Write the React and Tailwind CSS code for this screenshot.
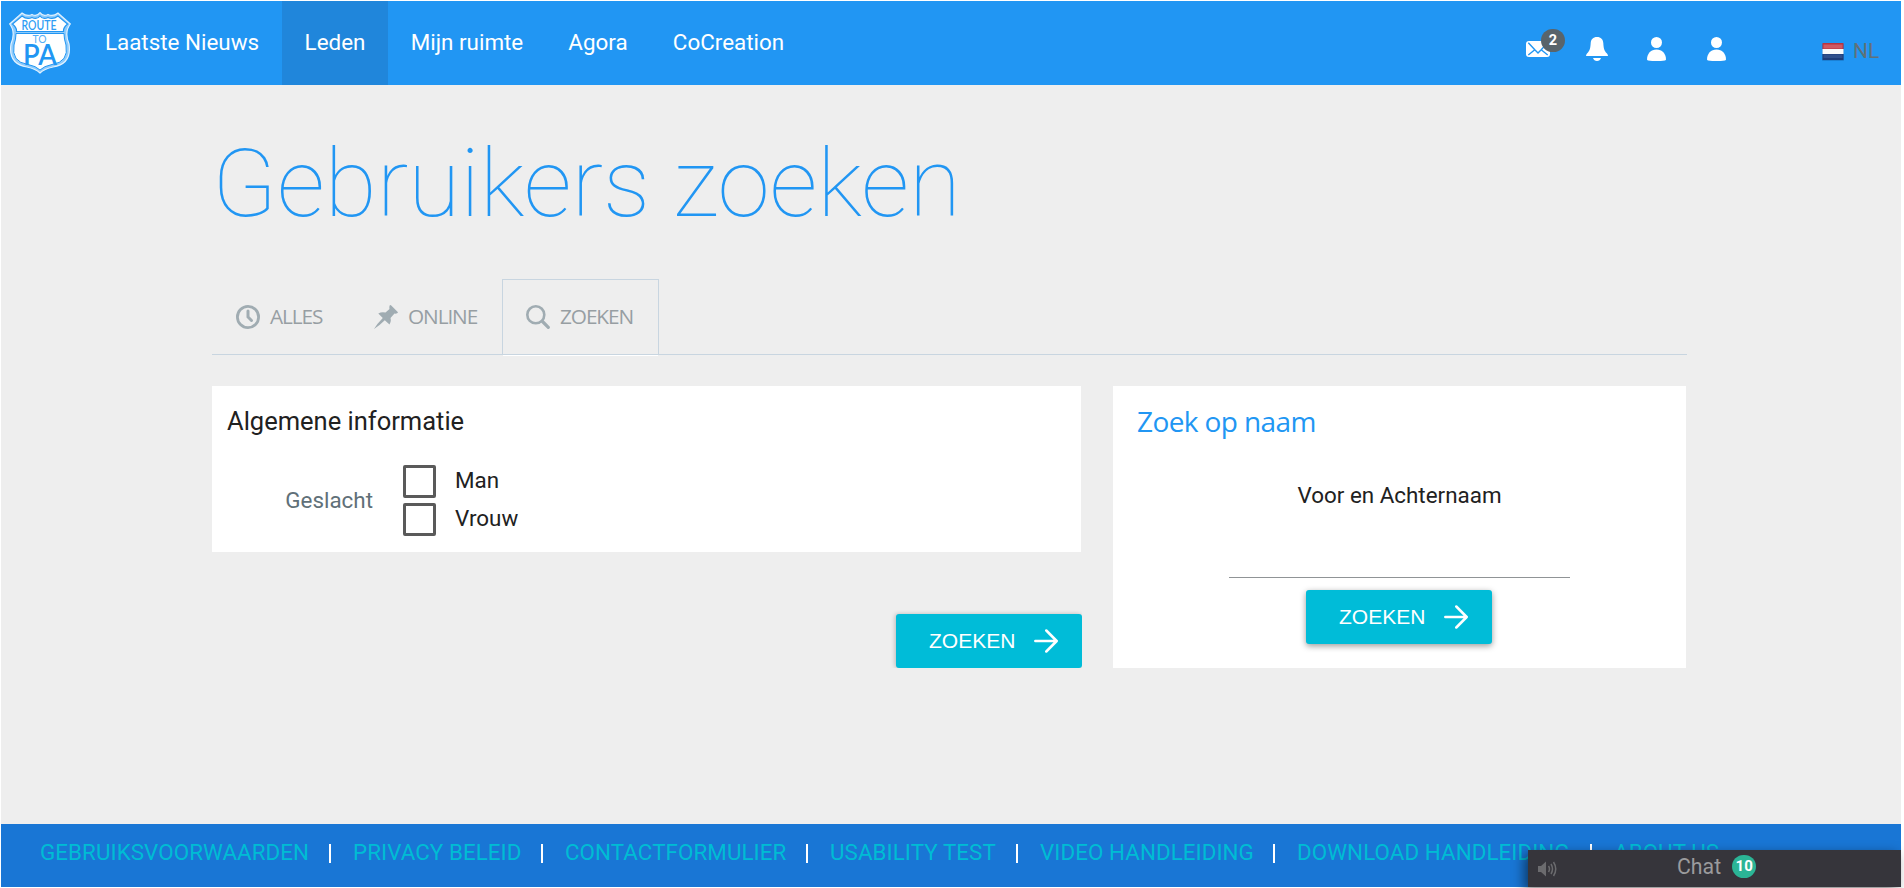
import React from "react";

function Logo() {
  return (
    <svg viewBox="0 0 62 62" className="h-[62px] w-[62px]">
      <path d="M13 1Q18 5 23 2.5Q28 5 31 .7Q34 5 39 2.5Q44 5 49 1L61.3 12Q55 20 60 32Q63 52 44 55Q35 57 31 61Q27 57 18 55Q-1 52 2 32Q7 20 .7 12Z" fill="#8ecbfb" stroke="#e3f2fe" strokeWidth="1.2" />
      <path d="M13 4Q18 8 23 5.5Q28 8 31 4Q34 8 39 5.5Q44 8 49 4L58.5 12Q54 16 54.500 19.500H7.500Q8 16 3.500 12Z" fill="#fff" stroke="#2196f3" strokeWidth="1.2" />
      <path d="M7 21.500H55Q55 27 57 33Q60 50 43 52.500Q35 54 31 58Q27 54 19 52.500Q2 50 5 33Q7 27 7 21.500Z" fill="#fff" stroke="#2196f3" strokeWidth="1" />
      <text x="30" y="18.300" textAnchor="middle" fontSize="13.500" textLength="35" lengthAdjust="spacingAndGlyphs" className="fill-[#2f9df4] font-['Lato',sans-serif] font-semibold">ROUTE</text>
      <text x="30.500" y="30.500" textAnchor="middle" fontSize="11.500" textLength="14" lengthAdjust="spacingAndGlyphs" className="fill-[#55aef6] font-['Lato',sans-serif]">TO</text>
      <text x="31" y="52.500" textAnchor="middle" fontSize="28.500" textLength="34" lengthAdjust="spacingAndGlyphs" className="fill-[#2196f3] font-['Lato',sans-serif] font-semibold">PA</text>
    </svg>
  );
}

function MailIcon() {
  return (
    <svg viewBox="0 0 24 16" className="h-4 w-6">
      <rect width="24" height="16" rx="3" fill="#fff" />
      <path d="M2.300 1.800 9.300 9.300 12 12 14.700 9.300 21.700 1.800M2.300 14 8.800 8.800M21.700 14 15.200 8.800" fill="none" stroke="#2196f3" strokeWidth="1.400" />
    </svg>
  );
}

function BellIcon() {
  return (
    <svg viewBox="0 0 22 24" className="h-6 w-[22px]" fill="#fff">
      <path d="M11 0C7 0 5 2.500 4.700 6C4.400 11 4 13.500 1 16.500Q0 17.500 0 19H22Q22 17.500 21 16.500C18 13.500 17.600 11 17.300 6C17 2.500 15 0 11 0ZM7 21H15Q14 24 11 24Q8 24 7 21Z" />
    </svg>
  );
}

function PersonIcon() {
  return (
    <svg viewBox="0 0 19 24" className="h-6 w-[19px]" fill="#fff">
      <circle cx="9.500" cy="5.500" r="5.500" />
      <path d="M0 22.500C0 16.500 4 12.500 9.500 12.500S19 16.500 19 22.500Q19 23.200 18 23.400Q9.500 24.500 1 23.400Q0 23.200 0 22.500Z" />
    </svg>
  );
}

function Flag() {
  return (
    <svg viewBox="0 0 22 18" className="h-[18px] w-[22px]">
      <rect y="1" width="22" height="17" rx="1" fill="#1565b0" opacity=".45" />
      <rect x=".5" width="21" height="6" fill="#b83341" />
      <rect x="1.500" y="1.500" width="19" height="4" fill="#cf5963" />
      <rect x=".5" y="6" width="21" height="5" fill="#fafafa" />
      <rect x=".5" y="11" width="21" height="6" fill="#1e3c78" />
      <rect x="1.500" y="11.500" width="19" height="3.500" fill="#304f8b" />
    </svg>
  );
}

function ClockIcon() {
  return (
    <svg viewBox="0 0 24 24" className="h-6 w-6" fill="none" stroke="#a0acb2" strokeLinecap="round">
      <circle cx="12" cy="12" r="10.600" strokeWidth="2.800" />
      <path d="M12 6V12L15.500 15.500" strokeWidth="3" />
    </svg>
  );
}

function PinIcon() {
  return (
    <svg viewBox="0 0 24 24" className="h-6 w-6" fill="#a0acb2">
      <path d="M16 0Q17 0 17.500 .8L23.500 6.800Q24.300 7.600 23.500 8Q22 9 20.500 8.600L16.500 13Q17.500 16.500 15.500 19.500L10.800 15.200Q5.500 20.500 0 24Q3 18.800 8.800 13L4.300 8.500Q7.500 6.500 11.500 7.500L15.500 4Q15 1.500 16 0Z" />
    </svg>
  );
}

function SearchIcon() {
  return (
    <svg viewBox="0 0 24 24" className="h-6 w-6" fill="none" stroke="#a0acb2" strokeLinecap="round">
      <circle cx="9.800" cy="9.800" r="8.500" strokeWidth="2.600" />
      <path d="M16.500 16.500 22.300 22.300" strokeWidth="3.200" />
    </svg>
  );
}

function ArrowIcon() {
  return (
    <svg viewBox="0 0 24 24" className="h-6 w-6" fill="none" stroke="#fff" strokeWidth="2.500" strokeLinecap="round" strokeLinejoin="round">
      <path d="M1.300 12H22.500M12.300 1.500 22.700 12 12.300 22.500" />
    </svg>
  );
}

function SearchButton({ className }) {
  return (
    <button className={"flex h-[54px] w-[186px] items-center rounded-[3px] bg-[#00bcd8] pl-[33px] font-['Liberation_Sans',sans-serif] text-[21px] text-white " + className}>
      <span className="w-[105px] text-left">ZOEKEN</span>
      <ArrowIcon />
    </button>
  );
}

const nav = [
  ["Laatste Nieuws", "w-[199px] pr-px"],
  ["Leden", "w-[106px] bg-[#2086db]"],
  ["Mijn ruimte", "w-[158px]"],
  ["Agora", "w-[104px]"],
  ["CoCreation", "w-[157px]"],
];

const tabs = [
  ["ALLES", ClockIcon, "w-[138px] pl-[24px]"],
  ["ONLINE", PinIcon, "w-[152px] pl-[24px]"],
  ["ZOEKEN", SearchIcon, "w-[157px] border-x border-[#c8d5e0] shadow-[inset_0_1px_0_#c8d5e0] pl-[23px]"],
];

const links = [
  ["GEBRUIKSVOORWAARDEN", "w-[313px]"],
  ["PRIVACY BELEID", "w-[212px]"],
  ["CONTACTFORMULIER", "w-[265px]"],
  ["USABILITY TEST", "w-[210px]"],
  ["VIDEO HANDLEIDING", "w-[257px]"],
  ["DOWNLOAD HANDLEIDING", "w-[317px]"],
  ["ABOUT US", "w-[150px]"],
];

export default function App() {
  return (
    <div className="h-[888px] w-[1904px] overflow-hidden bg-white pt-px pb-px pl-px font-['Roboto',sans-serif]">
      <div className="flex h-[886px] w-[1900px] flex-col bg-[#eeeeee]">
        <header className="flex h-[84px] shrink-0 items-center bg-[#2196f3]">
          <div className="w-[82px] pl-2">
            <Logo />
          </div>
          <nav className="flex h-full grow">
            {nav.map(([label, cls]) => (
              <a key={label} className={"flex h-full items-center justify-center whitespace-nowrap text-[22.4px] text-white " + cls}>
                {label}
              </a>
            ))}
          </nav>
          <div className="flex w-[375px] items-center pt-3">
            <div className="relative flex w-[60px]">
              <MailIcon />
              <span className="absolute -top-3 left-[15px] flex h-[23px] w-6 items-center justify-center rounded-full bg-[#59646b] text-[14.5px] font-bold text-white">2</span>
            </div>
            <div className="w-[61px]"><BellIcon /></div>
            <div className="w-[60px]"><PersonIcon /></div>
            <div className="w-[115px]"><PersonIcon /></div>
            <div className="flex items-center gap-[9px] pt-[5px] text-[21px] text-[#607178]">
              <Flag />
              <span>NL</span>
            </div>
          </div>
        </header>

        <main className="ml-[211px] w-[1475px] grow">
          <h1 className="mt-[43px] h-[120px] whitespace-nowrap text-[94.75px] leading-[112px] font-thin text-[#2196f3]">Gebruikers zoeken</h1>
          <div className="mt-[31px] flex h-[76px] border-b border-[#c8d5e0]">
            {tabs.map(([label, Icon, cls]) => (
              <div key={label} className={"flex h-[75px] items-center gap-[10px] " + cls}>
                <Icon />
                <span className="pt-px font-['Open_Sans',sans-serif] text-[20.8px] font-medium tracking-[-1.1px] text-[#979ea3]">{label}</span>
              </div>
            ))}
          </div>
          <div className="ml-[291px] h-px w-[155px] bg-white" />

          <div className="mt-[30px] flex h-[282px]">
            <div className="flex w-[870px] flex-col justify-between">
              <section className="h-[166px] w-[869px] bg-white pt-[19px] pl-[15px]">
                <h2 className="text-[25.500px] leading-8 text-[#212121]">Algemene informatie</h2>
                <div className="mt-[28px] flex items-center">
                  <span className="w-[146px] text-right text-[22.4px] text-[#607078]">Geslacht</span>
                  <div className="ml-[30px] flex flex-col gap-[5px]">
                    {["Man", "Vrouw"].map((label) => (
                      <label key={label} className="flex items-center">
                        <span className="h-[33px] w-[33px] rounded-[2px] border-[3px] border-[#5a5a5a]" />
                        <span className="ml-[19px] -mt-[3px] text-[22.4px] leading-7 text-[#212121]">{label}</span>
                      </label>
                    ))}
                  </div>
                </div>
              </section>
              <SearchButton className="self-end shadow-[-1px_0_4px_rgba(0,0,0,0.22)] [clip-path:inset(-8px_0_0_-8px)]" />
            </div>

            <section className="ml-[31px] flex w-[573px] flex-col items-center bg-white">
              <h2 className="mt-[16px] w-full pl-6 font-['Open_Sans',sans-serif] text-[28px] leading-[38px] tracking-[-0.6px] text-[#2196f3]">Zoek op naam</h2>
              <label className="mt-[41px] text-[22.4px] leading-7 text-[#212121]">Voor en Achternaam</label>
              <input className="mt-[28px] h-[41px] w-[341px] border-b border-[#909496] outline-none" />
              <SearchButton className="mt-[12px] -ml-px shadow-[0_2px_6px_rgba(0,0,0,0.4)]" />
            </section>
          </div>
        </main>

        <footer className="relative flex h-[63px] shrink-0 bg-[#1976d5] pt-[14px] pl-[39px]">
          {links.map(([label, cls], i) => (
            <div key={label} className={"flex shrink-0 whitespace-nowrap text-[22.4px] leading-7 tracking-[0.05px] text-[#00bcd4] " + cls}>
              <span className="grow">{label}</span>
              {i < links.length - 1 && <span className="mt-[6px] h-[19px] w-[2px] bg-white" />}
              <span className="w-[22px]" />
            </div>
          ))}
          <div className="absolute right-0 bottom-0 flex h-[37px] w-[373px] items-center bg-[#36353b] shadow-[-4px_4px_12px_rgba(0,0,0,0.5)]">
            <svg viewBox="0 0 20 16" className="ml-[9px] h-4 w-5" fill="#6b6b6e">
              <path d="M1 5H4L9 .5V15.500L4 11H1Z" />
              <path d="M11.500 5Q13.500 8 11.500 11M14 3Q17 8 14 13M16.500 1Q21 8 16.500 15" fill="none" stroke="#6b6b6e" strokeWidth="1.500" />
            </svg>
            <span className="ml-[120px] -mt-[3px] text-[21.300px] text-[#9b9b9d]">Chat</span>
            <span className="ml-[11px] -mt-1 flex h-[23px] w-6 items-center justify-center rounded-full bg-[#2bb596] text-[15px] font-bold text-white">10</span>
          </div>
        </footer>
      </div>
    </div>
  );
}
